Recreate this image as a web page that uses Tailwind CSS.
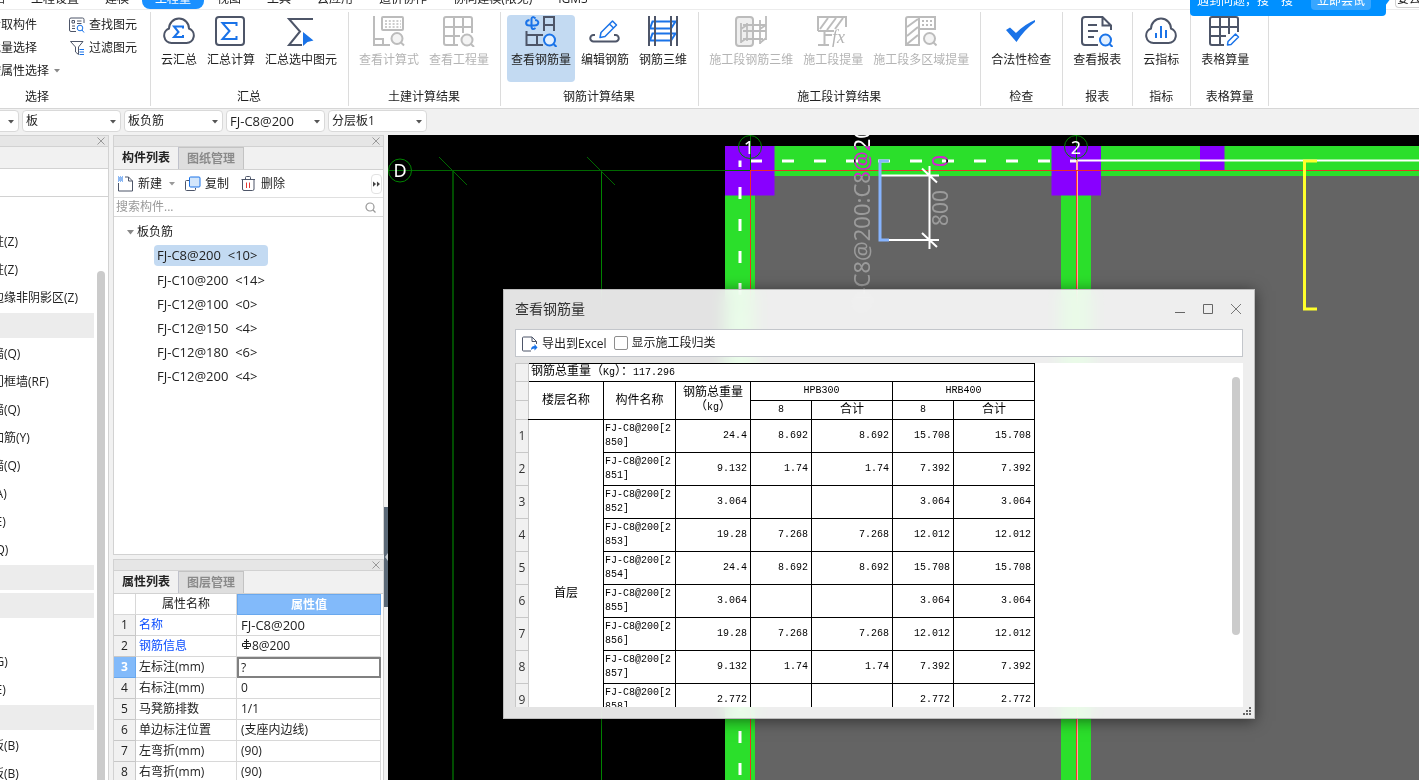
<!DOCTYPE html>
<html lang="zh-CN">

<head>
  <meta charset="UTF-8" />
  <meta name="viewport" content="width=device-width, initial-scale=1.0" />
  <title>查看钢筋量</title>
  <script src="https://cdn.jsdelivr.net/npm/@tailwindcss/browser@4"></script>
</head>

<body class="flex flex-col h-screen overflow-hidden bg-[#f1f1f1] text-[12px] leading-4 text-[#222] font-['Open_Sans','Noto_Sans_CJK_SC',sans-serif]">

  <!-- Pestañas superiores -->
  <header class="relative shrink-0 z-20">
    <nav class="flex items-end h-[10px] -ml-8 bg-white border-b border-[#ececec] whitespace-nowrap">
      <a href="#" class="px-[13px] leading-5">开始</a>
      <a href="#" class="px-[13px] leading-5">工程设置</a>
      <a href="#" class="px-[13px] leading-5">建模</a>
      <a href="#" class="px-[13px] leading-5 bg-[#1a90ff] text-white rounded-lg">工程量</a>
      <a href="#" class="px-[13px] leading-5">视图</a>
      <a href="#" class="px-[13px] leading-5">工具</a>
      <a href="#" class="px-[13px] leading-5">云应用</a>
      <a href="#" class="px-[13px] leading-5">造价协作</a>
      <a href="#" class="px-[13px] leading-5">协同建模(限免)</a>
      <a href="#" class="px-[13px] leading-5">IGMS</a>
    </nav>
    <!-- Aviso de búsqueda -->
    <div class="absolute right-[33px] -top-[15px] w-[196px] h-[31px] flex items-center justify-between pl-[7px] pr-[15px] rounded bg-[#0090ff] text-white">
      <span>遇到问题，搜一搜</span>
      <button class="px-[6px] h-[18px] leading-4 rounded-sm bg-[#38a6ff]">立即尝试</button>
      <svg class="absolute -right-[5px] top-[13px]" width="6" height="8" viewBox="0 0 6 8"><path d="M0 0h6L0 8z" fill="#0090ff" /></svg>
    </div>
    <div class="absolute right-0 -top-[12px] w-[24px] h-[20px] pl-px leading-5 overflow-hidden bg-white border border-r-0 border-[#d0d0d0] rounded-l-sm whitespace-nowrap">要去构件</div>
  </header>

  <!-- Cinta -->
  <div class="flex shrink-0 h-[99px] bg-white border-b border-[#d6d6d6] whitespace-nowrap">

    <section class="flex flex-col justify-between w-[227px] -ml-19 my-[2px] pt-px pb-px border-r border-[#dcdcdc] shrink-0">
      <div class="flex gap-[18px] pl-[65px]">
        <div class="flex flex-col items-start">
          <button class="h-[23px] leading-4">拾取构件</button>
          <button class="h-[23px] leading-4">批量选择</button>
          <button class="h-[23px] leading-4 flex items-center gap-[5px] w-[62px]">按属性选择
            <svg class="shrink-0" width="6" height="4" viewBox="0 0 6 4"><path d="M0 0h6L3 3.5z" fill="#888" /></svg>
          </button>
        </div>
        <div class="flex flex-col items-start">
          <button class="h-[23px] flex items-center gap-1">
            <svg width="16" height="16" viewBox="0 0 16 16" fill="none" stroke="#4d5568">
              <path d="M7 14.5H2A1.5 1.5 0 0 1 .5 13V2.5A1.5 1.5 0 0 1 2 1h11.500A1.5 1.5 0 0 1 15 2.500V6" />
              <path d="M3 3.500h2.500v2.500H3zM8 4h4.500M8 6.500h4.500M3 9h3M3 11.500h3" />
              <circle cx="11" cy="11" r="2.800" stroke="#1a73e8" /><path d="M13 13l2 2.500" stroke="#1a73e8" />
            </svg>查找图元
          </button>
          <button class="h-[23px] flex items-center gap-1">
            <svg width="16" height="16" viewBox="0 0 16 16" fill="none" stroke="#4d5568">
              <path d="M1.500 1.500h12.500L9.500 7v7.500L6.500 12V7z" />
              <path d="M10.500 9.500H15M10.500 12H15M10.500 14.500H15" stroke="#1a73e8" />
            </svg>过滤图元
          </button>
        </div>
      </div>
      <h2 class="text-center">选择</h2>
    </section>

    <section class="flex flex-col justify-between my-[2px] pt-[3px] pb-px pl-[6px] pr-[7px] border-r border-[#dcdcdc] shrink-0">
      <div class="flex gap-[2px]">
        <button class="flex flex-col items-center h-[67px] px-1 gap-[5px]">
          <svg width="32" height="32" viewBox="0 0 32 32" fill="none" stroke="#4d5568" stroke-width="2">
            <path d="M8.500 28a7.500 7.500 0 0 1-2.500-14.500a10 10 0 0 1 20 0a7.500 7.500 0 0 1-2.500 14.500z" />
            <path d="M20 13.500v-2h-9l4.500 5.500-4.500 5h9v-2" stroke="#1a73e8" />
          </svg>云汇总
        </button>
        <button class="flex flex-col items-center h-[67px] px-1 gap-[5px]">
          <svg width="32" height="32" viewBox="0 0 32 32" fill="none" stroke="#4d5568" stroke-width="2">
            <rect x="1" y="2" width="28" height="28" rx="3" />
            <path d="M21.500 11V8H7.500l7 8-7 8h14v-3" stroke="#1a73e8" />
          </svg>汇总计算
        </button>
        <button class="flex flex-col items-center h-[67px] px-1 gap-[5px]">
          <svg width="32" height="32" viewBox="0 0 32 32" fill="none" stroke="#4d5568" stroke-width="2">
            <path d="M28 4H4l11 12.500L4 30h13" />
            <path d="M18 17l10.500 8.500-6 1.500-4.500 4z" fill="#1a73e8" stroke="none" />
          </svg>汇总选中图元
        </button>
      </div>
      <h2 class="text-center">汇总</h2>
    </section>

    <section class="flex flex-col justify-between my-[2px] pt-[3px] pb-px pl-[6px] pr-[7px] border-r border-[#dcdcdc] shrink-0">
      <div class="flex gap-[2px] text-[#b4b4b4]">
        <button class="flex flex-col items-center h-[67px] px-1 gap-[5px]">
          <svg width="32" height="32" viewBox="0 0 32 32" fill="none" stroke="#bcbcbc" stroke-width="2">
            <path d="M1 1v29h16M1 24h9v6" />
            <rect x="9" y="2" width="21" height="13" rx="1" />
            <path d="M12 6h16M12 9h16M12 12h16" stroke-width="1.500" stroke-dasharray="2 1.800" />
            <circle cx="24" cy="23.500" r="5.500" fill="#f4f4f4" /><path d="M28 27.500l3 3" />
          </svg>查看计算式
        </button>
        <button class="flex flex-col items-center h-[67px] px-1 gap-[5px]">
          <svg width="32" height="32" viewBox="0 0 32 32" fill="none" stroke="#bcbcbc" stroke-width="2">
            <path d="M15 30H3a2 2 0 0 1-2-2V4a2 2 0 0 1 2-2h24a2 2 0 0 1 2 2v14M1 12h28M1 21h16M11 2v28M20 2v16" />
            <circle cx="24" cy="25" r="5.500" fill="#f4f4f4" /><path d="M28 29l3 3" />
          </svg>查看工程量
        </button>
      </div>
      <h2 class="text-center">土建计算结果</h2>
    </section>

    <section class="flex flex-col justify-between my-[2px] pt-[3px] pb-px pl-[6px] pr-[7px] border-r border-[#dcdcdc] shrink-0">
      <div class="flex gap-[2px]">
        <button class="flex flex-col items-center h-[67px] px-1 gap-[5px] rounded-sm bg-[#c3daf2]">
          <svg width="32" height="32" viewBox="0 0 32 32" fill="none" stroke="#4d5568" stroke-width="2">
            <path d="M19 16V2h10v14M19 10h10M1.500 16v14H18M1.500 20H18M12 20v10" />
            <path d="M10.500 3.500Q7 .5 6.500 4v8q.5 3.500 4 1M4.500 5C0 5.500 0 10.500 4.500 10.500h5c5 0 5-5.500.5-5.500" stroke="#1a73e8" />
            <circle cx="24.500" cy="25" r="5.500" fill="#e3f0ff" stroke="#1a73e8" /><path d="M28.500 29l3 3" stroke="#1a73e8" />
          </svg>查看钢筋量
        </button>
        <button class="flex flex-col items-center h-[67px] px-1 gap-[5px]">
          <svg width="32" height="32" viewBox="0 0 32 32" fill="none" stroke="#4d5568" stroke-width="2">
            <path d="M6 20H4.500a3.200 3.200 0 0 0 0 6.500h22a3.200 3.200 0 0 0 0-6.500H25" />
            <path d="M11 22.500l1-5L23.500 6l4 4L16 21.500zM20.500 9l4 4" stroke="#1a73e8" stroke-width="1.500" stroke-linejoin="round" />
          </svg>编辑钢筋
        </button>
        <button class="flex flex-col items-center h-[67px] px-1 gap-[5px]">
          <svg width="32" height="32" viewBox="0 0 32 32" fill="none" stroke="#4d5568" stroke-width="2">
            <path d="M5.500 6.500h23l-4.500 7H3zM5.500 18.500h23l-4.500 7H3z" stroke="#1a73e8" />
            <path d="M2 1v30M8 1v30M24 1v30M30 1v30" />
          </svg>钢筋三维
        </button>
      </div>
      <h2 class="text-center">钢筋计算结果</h2>
    </section>

    <section class="flex flex-col justify-between my-[2px] pt-[3px] pb-px pl-[6px] pr-[7px] border-r border-[#dcdcdc] shrink-0">
      <div class="flex gap-[2px] text-[#b4b4b4]">
        <button class="flex flex-col items-center h-[67px] px-1 gap-[5px]">
          <svg width="32" height="32" viewBox="0 0 32 32" fill="none" stroke="#bcbcbc" stroke-width="2">
            <rect x="1" y="2" width="17" height="29" rx="3" fill="#efefef" />
            <path d="M6 8v20M12 8v18M25 5v24M31 1v24M8 10h23M8 16h23M8 24h20M6 14l6-4M6 27l6-4M25 14l6-4M25 28l6-5" stroke-width="1.800" />
          </svg>施工段钢筋三维
        </button>
        <button class="flex flex-col items-center h-[67px] px-1 gap-[5px]">
          <svg width="32" height="32" viewBox="0 0 32 32" fill="none" stroke="#bcbcbc" stroke-width="2">
            <path d="M1 16V2h28v10M1 16h16M3 14L11 3M10 15l9-12M18 14l8-11M7.500 16v14M1 30h11M7.500 20H15" />
            <text x="15" y="28" font-family="Liberation Serif" font-style="italic" font-size="18" fill="#b4b4b4" stroke="none">fx</text>
          </svg>施工段提量
        </button>
        <button class="flex flex-col items-center h-[67px] px-1 gap-[5px]">
          <svg width="32" height="32" viewBox="0 0 32 32" fill="none" stroke="#bcbcbc" stroke-width="2">
            <path d="M14 2H3a2 2 0 0 0-2 2v26h13zh16v12H14M2 12l11-8M2 21l11-9M2 29l11-9" />
            <path d="M17 6h10M17 10h10" stroke-dasharray="2 2" />
            <circle cx="24.500" cy="23.500" r="5.500" fill="#f4f4f4" /><path d="M28.500 27.500l3 3" />
          </svg>施工段多区域提量
        </button>
      </div>
      <h2 class="text-center">施工段计算结果</h2>
    </section>

    <section class="flex flex-col justify-between my-[2px] pt-[3px] pb-px pl-[6px] pr-[7px] border-r border-[#dcdcdc] shrink-0">
      <button class="flex flex-col items-center h-[67px] px-1 gap-[5px]">
        <svg width="32" height="32" viewBox="0 0 32 32"><path d="M1 15l4-2.500 6 5.500Q20 9 30 5v2Q19 15 11.500 27z" fill="#1a73e8" /></svg>合法性检查
      </button>
      <h2 class="text-center">检查</h2>
    </section>

    <section class="flex flex-col justify-between my-[2px] pt-[3px] pb-px pl-[6px] pr-[7px] border-r border-[#dcdcdc] shrink-0">
      <button class="flex flex-col items-center h-[67px] px-1 gap-[5px]">
        <svg width="32" height="32" viewBox="0 0 32 32" fill="none" stroke="#4d5568" stroke-width="2">
          <path d="M17 30H4a3 3 0 0 1-3-3V5a3 3 0 0 1 3-3h17.500L30 10.500V15M21.500 2v8.500H30M7 10h9M7 16h10M7 22h6" />
          <circle cx="24.500" cy="25" r="5.500" fill="#e3f0ff" stroke="#1a73e8" /><path d="M28.500 29l3 3" stroke="#1a73e8" />
        </svg>查看报表
      </button>
      <h2 class="text-center">报表</h2>
    </section>

    <section class="flex flex-col justify-between my-[2px] pt-[3px] pb-px pl-[6px] pr-[7px] border-r border-[#dcdcdc] shrink-0">
      <button class="flex flex-col items-center h-[67px] px-1 gap-[5px]">
        <svg width="32" height="32" viewBox="0 0 32 32" fill="none" stroke="#4d5568" stroke-width="2">
          <path d="M8.500 28a7.500 7.500 0 0 1-2.500-14.500a10 10 0 0 1 20 0a7.500 7.500 0 0 1-2.500 14.500z" />
          <path d="M11 18v5M16 11v12M21 15v8" stroke="#1a73e8" />
        </svg>云指标
      </button>
      <h2 class="text-center">指标</h2>
    </section>

    <section class="flex flex-col justify-between items-start my-[2px] pt-[3px] pb-px px-[6px] w-[78px] border-r border-[#dcdcdc] shrink-0">
      <button class="flex flex-col items-center h-[67px] px-1 gap-[5px]">
        <svg width="32" height="32" viewBox="0 0 32 32" fill="none" stroke="#4d5568" stroke-width="2">
          <path d="M15 30H3a2 2 0 0 1-2-2V4a2 2 0 0 1 2-2h24a2 2 0 0 1 2 2v13M1 12h28M1 21h16M11 2v28M20 2v17" />
          <path d="M17 31h14V18h-6l-8 8z" fill="#fff" stroke="none" />
          <path d="M18.500 30l.500-3.500 7.500-7.500 3 3-7.500 7.500z" stroke="#1a73e8" stroke-width="1.500" stroke-linejoin="round" />
        </svg>表格算量
      </button>
      <h2 class="w-full text-center">表格算量</h2>
    </section>
  </div>

  <!-- Filtros -->
  <div class="flex shrink-0 gap-[3px] h-[26px] pt-px -ml-20">
    <div class="relative">
      <select aria-label="楼层" class="appearance-none w-[99px] h-[22px] pl-[3px] bg-white border border-[#d9d9d9] rounded-sm"><option>首层</option></select>
      <svg class="absolute right-[5px] top-[10px]" width="6" height="4" viewBox="0 0 6 4"><path d="M0 0h6L3 3.500z" fill="#555" /></svg>
    </div>
    <div class="relative">
      <select aria-label="构件类别" class="appearance-none w-[99px] h-[22px] pl-[3px] bg-white border border-[#d9d9d9] rounded-sm"><option>板</option></select>
      <svg class="absolute right-[5px] top-[10px]" width="6" height="4" viewBox="0 0 6 4"><path d="M0 0h6L3 3.500z" fill="#555" /></svg>
    </div>
    <div class="relative">
      <select aria-label="构件类型" class="appearance-none w-[99px] h-[22px] pl-[3px] bg-white border border-[#d9d9d9] rounded-sm"><option>板负筋</option></select>
      <svg class="absolute right-[5px] top-[10px]" width="6" height="4" viewBox="0 0 6 4"><path d="M0 0h6L3 3.500z" fill="#555" /></svg>
    </div>
    <div class="relative">
      <select aria-label="构件" class="appearance-none w-[99px] h-[22px] pl-[3px] text-[13px] bg-white border border-[#d9d9d9] rounded-sm"><option>FJ-C8@200</option></select>
      <svg class="absolute right-[5px] top-[10px]" width="6" height="4" viewBox="0 0 6 4"><path d="M0 0h6L3 3.500z" fill="#555" /></svg>
    </div>
    <div class="relative">
      <select aria-label="分层" class="appearance-none w-[99px] h-[22px] pl-[3px] bg-white border border-[#d9d9d9] rounded-sm"><option>分层板1</option></select>
      <svg class="absolute right-[5px] top-[10px]" width="6" height="4" viewBox="0 0 6 4"><path d="M0 0h6L3 3.500z" fill="#555" /></svg>
    </div>
  </div>

  <div class="flex flex-1 min-h-0">

    <!-- Navegación -->
    <aside class="flex flex-col shrink-0 w-[109px] overflow-hidden bg-white border-r border-t border-[#d2d2d2]">
      <div class="flex shrink-0 items-center justify-end h-[11px] pr-[3px] bg-[#e6e6e6] border-b border-[#d2d2d2]">
        <button aria-label="关闭导航栏"><svg width="8" height="8" viewBox="0 0 8 8" stroke="#999"><path d="M.5.5l7 7M7.500.5l-7 7" /></svg></button>
      </div>
      <div class="shrink-0 h-[22px] bg-[#f1f1f1] border-b border-[#d2d2d2]"></div>
      <div class="shrink-0 h-[28px] border-b border-[#d2d2d2]"></div>
      <div class="flex flex-1 min-h-0 justify-between">
        <ul id="navList" class="w-[94px] pt-[3px]"></ul>
        <div class="w-2 mr-[3px] mt-[74px] rounded-t bg-[#cbcbcb]"></div>
      </div>
    </aside>

    <!-- Paneles centrales -->
    <div class="flex flex-col shrink-0 w-[271px] ml-1 gap-[4px]">
      <section class="flex flex-col shrink-0 h-[420px] bg-white border border-[#d2d2d2]">
        <div class="flex shrink-0 items-center justify-end h-[11px] pr-[3px] bg-[#e6e6e6] border-b border-[#d2d2d2]">
          <button aria-label="关闭构件列表"><svg width="8" height="8" viewBox="0 0 8 8" stroke="#999"><path d="M.5.5l7 7M7.500.5l-7 7" /></svg></button>
        </div>
        <div class="flex shrink-0 h-[23px] bg-[#f1f1f1] border-b border-[#d2d2d2] font-bold">
          <button class="w-[65px] border-r border-[#bfc1cb]">构件列表</button>
          <button class="w-[65px] border-r border-t border-[#c3c3c3] bg-[#dedede] text-[#8a8a8a]">图纸管理</button>
        </div>
        <div class="flex shrink-0 items-center h-[28px] pl-1 pr-px border-b border-[#e0e0e0]">
          <button class="flex items-center gap-[4px]">
            <svg width="16" height="16" viewBox="0 0 16 16" fill="none" stroke="#4d5568">
              <path d="M.5 7v8h14V5l-4-4H7M10.500 1v4h4" />
              <path d="M0 1h5M0 3h5M0 5h5" stroke="#1a73e8" stroke-dasharray="1 1" /><path d="M1 2h4M1 4h4" stroke="#1a73e8" stroke-dasharray="1 1" />
            </svg>新建
          </button>
          <svg class="ml-[7px]" width="6" height="4" viewBox="0 0 6 4"><path d="M0 0h6L3 3.500z" fill="#999" /></svg>
          <button class="flex items-center gap-[4px] ml-[10px]">
            <svg width="16" height="16" viewBox="0 0 16 16" fill="none" stroke="#4d5568">
              <path d="M4 4.500H1.500a1 1 0 0 0-1 1v8a1 1 0 0 0 1 1h8a1 1 0 0 0 1-1V12" />
              <rect x="4.500" y="1" width="10.500" height="10" rx="1" fill="#d3e6fb" stroke="#1a73e8" />
            </svg>复制
          </button>
          <button class="flex items-center gap-[4px] ml-[12px]">
            <svg width="16" height="16" viewBox="0 0 16 16" fill="none" stroke="#4d5568">
              <path d="M.5 3.500H14M4.500 3.500V1.500A1 1 0 0 1 5.500.5h3a1 1 0 0 1 1 1v2M1.500 3.500V13a1.500 1.500 0 0 0 1.500 1.500h8.500A1.500 1.500 0 0 0 13 13V3.500" /><path d="M5.500 6.500v5.500M8.500 6.500v5.500" stroke="#e53935" />
            </svg>删除
          </button>
          <button aria-label="更多" class="flex items-center justify-center ml-auto w-[11px] h-5 border border-[#e2e2e2] rounded-sm">
            <svg class="shrink-0" width="7" height="6" viewBox="0 0 8 6" fill="#444"><path d="M0 0l3.500 3L0 6zM4.500 0L8 3 4.500 6z" /></svg>
          </button>
        </div>
        <div class="flex shrink-0 items-center h-[19px] pl-[2px] pr-[7px] border-b border-[#d8d8d8]">
          <input type="text" aria-label="搜索构件" placeholder="搜索构件..." class="flex-1 min-w-0 outline-none placeholder:text-[#999]" />
          <svg width="11" height="11" viewBox="0 0 11 11" fill="none" stroke="#999" stroke-width="1.200"><circle cx="5" cy="5" r="4" /><path d="M8 8l2.500 2.500" /></svg>
        </div>
        <div class="pt-[3px]">
          <div class="flex items-center h-[24px] pl-[13px] gap-[3px]">
            <svg width="7" height="5" viewBox="0 0 7 5"><path d="M0 0h7L3.500 4.500z" fill="#888" /></svg>板负筋
          </div>
          <ul class="pl-10 text-[13px]">
            <li class="h-[24px] py-px"><span class="block w-[114px] h-[21px] pl-[3px] leading-5 rounded-sm bg-[#c3daf2]">FJ-C8@200&nbsp; &lt;10&gt;</span></li>
            <li class="h-[24px] pl-[3px] leading-6">FJ-C10@200&nbsp; &lt;14&gt;</li>
            <li class="h-[24px] pl-[3px] leading-6">FJ-C12@100&nbsp; &lt;0&gt;</li>
            <li class="h-[24px] pl-[3px] leading-6">FJ-C12@150&nbsp; &lt;4&gt;</li>
            <li class="h-[24px] pl-[3px] leading-6">FJ-C12@180&nbsp; &lt;6&gt;</li>
            <li class="h-[24px] pl-[3px] leading-6">FJ-C12@200&nbsp; &lt;4&gt;</li>
          </ul>
        </div>
      </section>

      <section class="flex flex-col flex-1 min-h-0 overflow-hidden bg-white border border-b-0 border-[#d2d2d2]">
        <div class="flex shrink-0 items-center justify-end h-[11px] pr-[3px] bg-[#e6e6e6] border-b border-[#d2d2d2]">
          <button aria-label="关闭属性列表"><svg width="8" height="8" viewBox="0 0 8 8" stroke="#999"><path d="M.5.5l7 7M7.500.5l-7 7" /></svg></button>
        </div>
        <div class="flex shrink-0 h-[23px] bg-[#f1f1f1] border-b border-[#d2d2d2] font-bold">
          <button class="w-[65px] border-r border-[#bfc1cb]">属性列表</button>
          <button class="w-[65px] border-r border-t border-[#c3c3c3] bg-[#dedede] text-[#8a8a8a]">图层管理</button>
        </div>
        <table class="table-fixed w-[267px] border-separate border-spacing-0">
          <colgroup><col class="w-[22px]" /><col class="w-[101px]" /><col /></colgroup>
          <thead>
            <tr>
              <th class="h-[21px] p-0 border-r border-b border-[#d8d8d8]"></th>
              <th class="h-[21px] p-0 font-normal border-r border-b border-[#d8d8d8]">属性名称</th>
              <th class="h-[21px] p-0 bg-[#82bafa] border border-[#69a8ee] text-white">属性值</th>
            </tr>
          </thead>
          <tbody id="propRows"></tbody>
        </table>
      </section>
    </div>

    <!-- Divisor -->
    <div class="shrink-0 w-1 pt-[372px]">
      <button aria-label="收起面板" class="flex items-center w-1 h-[100px] bg-[#5b6977]">
        <svg width="4" height="8" viewBox="0 0 4 8"><path d="M4 0v8L1 4z" fill="#c8ced4" /></svg>
      </button>
    </div>

    <!-- Área de dibujo -->
    <main class="relative flex-1 min-w-0 overflow-hidden bg-black">
      <svg class="absolute inset-0 w-full h-full" font-family="Noto Sans" fill="none">
        <g transform="translate(-388 -135)">
          <path d="M755 175h2000v1000H755z" fill="#646464" />
          <path d="M725 146h2000v30H725zM725 146h30v1000h-30zM1061 146h30v1000h-30z" fill="#2bdf2b" />
          <path d="M725 146h49.500v49.500H725zM1051.500 146h49.500v49.500h-49.500zM1200 146h24.500v24.500H1200z" fill="#8800ff" />
          <path d="M750 161H1076" stroke="#fff" stroke-width="3" stroke-dasharray="12 20" />
          <path d="M740 160.500V1000" stroke="#fff" stroke-width="3" stroke-dasharray="12 20" stroke-dashoffset="5.500" />
          <path d="M1076 160.500H2400" stroke="#fff" stroke-width="2" />
          <path d="M1077 160V1000" stroke="#ffb0a0" stroke-width="2" />
          <path d="M1076.500 170V1000" stroke="#ff3030" />
          <path d="M750 170.500H2400" stroke="#e8302a" /><path d="M750.500 170V1000" stroke="#e8302a" />
          <path d="M388 170.500H750M750.500 135v35M1076.500 135v25" stroke="#006800" />
          <path d="M453 171V1000" stroke="#004c00" stroke-width="2" />
          <path d="M601.500 171V1000" stroke="#008400" />
          <path d="M439 157l28 28M587 157l28 28" stroke="#006800" />
          <g stroke="#008400"><circle cx="400" cy="170.500" r="11.500" /><circle cx="750" cy="147" r="11.500" /><circle cx="1076" cy="147" r="11.500" /></g>
          <g fill="#fff" font-size="18" text-anchor="middle">
            <text x="400" y="177">D</text><text x="749" y="154">1</text><text x="1076" y="154">2</text>
          </g>
          <!-- Cota del refuerzo seleccionado -->
          <path d="M881 175.500h58M889 240h50M929.500 166v83M922 168.500l15 14M922 233l15 14" stroke="#fff" stroke-width="2" />
          <path d="M889 161h-9v79h9" stroke="#86b4ff" stroke-width="3" />
          <path d="M1317 161h-12.500v148h12.500" stroke="#ffff2b" stroke-width="3" />
          <g fill="#fff" font-size="21">
            <text class="mix-blend-difference" font-size="22" transform="translate(870 312) rotate(-90)">FJ-C8@200:C8@200</text>
            <text class="mix-blend-difference" transform="translate(948 226) rotate(-90)">800</text>
            <text class="mix-blend-difference" transform="translate(948 167) rotate(-90)">0</text>
          </g>
        </g>
      </svg>

      <!-- Ventana 查看钢筋量 -->
      <div role="dialog" aria-labelledby="dlgTitle"
        class="absolute left-[115px] top-[154px] w-[752px] h-[430px] flex flex-col px-[11px] pb-[11px] bg-white/89 backdrop-blur-sm border border-[#bdbdbd] shadow-[0_2px_14px_rgba(0,0,0,0.5)]">
        <div class="flex shrink-0 items-center justify-between h-[39px] pr-px pb-[2px]">
          <h1 id="dlgTitle" class="text-[14px] text-[#333]">查看钢筋量</h1>
          <div class="flex gap-[16px]">
            <button aria-label="最小化"><svg width="12" height="12" viewBox="0 0 12 12" fill="none" stroke="#666"><path d="M1 9.500h10" /></svg></button>
            <button aria-label="最大化"><svg width="12" height="12" viewBox="0 0 12 12" fill="none" stroke="#666"><path d="M1.500 1.500h9v9h-9z" /></svg></button>
            <button aria-label="关闭"><svg width="12" height="12" viewBox="0 0 12 12" fill="none" stroke="#777"><path d="M1 1l10 10M11 1L1 11" /></svg></button>
          </div>
        </div>
        <div class="flex shrink-0 items-center h-[28px] pl-[6px] bg-white border border-[#c3c6cb]">
          <button class="flex items-center gap-[4px] pt-[2px]">
            <svg width="16" height="16" viewBox="0 0 16 16" fill="none" stroke="#4d5568">
              <path d="M9 15H1.500a1 1 0 0 1-1-1V2a1 1 0 0 1 1-1H10l4.500 4.500V8M10 1v4.500h4.500" /><path d="M9 14q0-4 3.500-4V8l3 3.500-3 3v-2Q10 12.500 9 14z" fill="#1a73e8" stroke="none" />
            </svg>导出到Excel
          </button>
          <input id="chkSegment" type="checkbox" class="appearance-none w-[14px] h-[14px] ml-[8px] bg-white border border-[#8d8d8d] rounded-[2px]" />
          <label for="chkSegment" class="ml-[3px]">显示施工段归类</label>
        </div>
        <div class="flex flex-1 min-h-0 justify-between mt-[6px] overflow-hidden bg-white">
          <table class="table-fixed w-[520px] shrink-0 self-start border-collapse text-black leading-[14px] font-['Liberation_Mono','Noto_Sans_CJK_SC',monospace]">
            <colgroup>
              <col class="w-[13px]" /><col class="w-[75px]" /><col class="w-[72px]" /><col class="w-[75px]" />
              <col class="w-[61px]" /><col class="w-[81px]" /><col class="w-[61px]" /><col class="w-[81px]" />
            </colgroup>
            <thead>
              <tr>
                <th class="h-[18px] p-0 bg-[#f1f1f1] border border-[#c8c8c8]"></th>
                <th colspan="7" class="h-[18px] py-0 px-[2px] text-left font-normal border border-black border-l-[#c8c8c8]">钢筋总重量（<span class="text-[10px]">Kg</span>）：<span class="text-[10px]">117.296</span></th>
              </tr>
              <tr>
                <th class="h-[19px] p-0 bg-[#f1f1f1] border border-[#c8c8c8]"></th>
                <th rowspan="2" class="p-0 font-normal border border-black border-l-[#c8c8c8]">楼层名称</th>
                <th rowspan="2" class="p-0 font-normal border border-black">构件名称</th>
                <th rowspan="2" class="p-0 font-normal border border-black">钢筋总重量<br />（<span class="text-[10px]">kg</span>）</th>
                <th colspan="2" class="h-[19px] p-0 text-[10px] font-normal border border-black">HPB300</th>
                <th colspan="2" class="h-[19px] p-0 text-[10px] font-normal border border-black">HRB400</th>
              </tr>
              <tr>
                <th class="h-[19px] p-0 bg-[#f1f1f1] border border-[#c8c8c8]"></th>
                <th class="h-[19px] p-0 text-[10px] font-normal border border-black">8</th>
                <th class="h-[19px] p-0 font-normal border border-black">合计</th>
                <th class="h-[19px] p-0 text-[10px] font-normal border border-black">8</th>
                <th class="h-[19px] p-0 font-normal border border-black">合计</th>
              </tr>
            </thead>
            <tbody id="rebarRows"></tbody>
          </table>
          <div class="shrink-0 w-2 h-[258px] mt-[14px] mr-[3px] rounded bg-[#cbcbcb]"></div>
        </div>
        <svg class="absolute right-[2px] bottom-[2px]" width="9" height="9" viewBox="0 0 9 9" fill="#666"><path d="M6 0h2v2H6zM3 3h2v2H3zM6 3h2v2H6zM0 6h2v2H0zM3 6h2v2H3zM6 6h2v2H6z" /></svg>
      </div>
    </main>
  </div>

  <script>
    // null = encabezado de grupo
    const navItems = ['柱(Z)', '构造柱(Z)', '砌体柱(Z)', '约束边缘非阴影区(Z)', null, '剪力墙(Q)', '人防门框墙(RF)', '砌体墙(Q)',
      '砌体加筋(Y)', '保温墙(Q)', '暗梁(A)', '墙垛(E)', '幕墙(Q)', null, null, '梁(L)', '连梁(G)', '圈梁(E)', null, '现浇板(B)', '螺旋板(B)'];

    document.getElementById('navList').innerHTML = navItems.map(t => t
      ? `<li class="h-[28px] -ml-8 leading-7 whitespace-nowrap"><a href="#">${t}</a></li>`
      : `<li class="h-[28px] py-px"><div class="h-[25px] bg-[#ececec]"></div></li>`).join('');

    const rebarMark = `<svg class="inline align-baseline" width="11" height="11" viewBox="0 0 11 11" fill="none" stroke="#222"><path d="M5.500 0v10M3 2.500h5M1.500 4.500h8v3h-8zM3 9.500h5" /></svg>`;
    const props = [
      ['名称', '<span class="text-[13px]">FJ-C8@200</span>', true],
      ['钢筋信息', rebarMark + '8@200', true],
      ['左标注(mm)', '?'],
      ['右标注(mm)', '0'],
      ['马凳筋排数', '1/1'],
      ['单边标注位置', '(支座内边线)'],
      ['左弯折(mm)', '(90)'],
      ['右弯折(mm)', '(90)']
    ];

    document.getElementById('propRows').innerHTML = props.map(([name, value, key], i) => {
      const active = i === 2;
      const head = active
        ? 'h-[21px] p-0 bg-[#82bafa] text-white font-bold border-r border-b border-[#69a8ee]'
        : 'h-[21px] p-0 bg-[#f1f1f1] font-normal border-r border-b border-[#c8c8c8]';
      const cell = active
        ? `<td class="h-[21px] p-0"><input aria-label="${name}" value="${value}" class="block w-full h-[21px] pl-[2px] border-2 border-[#808080] outline-none" /></td>`
        : `<td class="h-[21px] py-0 px-1 border-r border-b border-[#d8d8d8]">${value}</td>`;
      return `<tr><th class="${head}">${i + 1}</th>
        <td class="${key ? 'h-[21px] py-0 px-[3px] text-[#0a4dff] border-r border-b border-[#d8d8d8]' : 'h-[21px] py-0 px-[3px] border-r border-b border-[#d8d8d8]'}">${name}</td>${cell}</tr>`;
    }).join('');

    // total, HPB300, HRB400
    const rebar = [
      ['24.4', '8.692', '15.708'],
      ['9.132', '1.74', '7.392'],
      ['3.064', '', '3.064'],
      ['19.28', '7.268', '12.012'],
      ['24.4', '8.692', '15.708'],
      ['3.064', '', '3.064'],
      ['19.28', '7.268', '12.012'],
      ['9.132', '1.74', '7.392'],
      ['2.772', '', '2.772']
    ];
    const num = v => `<td class="h-[33px] py-0 px-[3px] text-right text-[10px] border border-black">${v}</td>`;

    document.getElementById('rebarRows').innerHTML = rebar.map(([total, hpb, hrb], i) => `<tr>
      <th class="h-[33px] p-0 bg-[#f1f1f1] text-[#333] font-normal border border-[#c8c8c8] font-['Open_Sans',sans-serif]">${i + 1}</th>
      ${i === 0 ? '<td rowspan="10" class="p-0 text-center border border-black border-l-[#c8c8c8]">首层</td>' : ''}
      <td class="h-[33px] pt-0 pb-px px-px text-[10px] break-all border border-black">FJ-C8@200[2${850 + i}]</td>
      ${num(total)}${num(hpb)}${num(hpb)}${num(hrb)}${num(hrb)}</tr>`).join('')
      + `<tr><th class="h-[51px] bg-[#f1f1f1] border border-[#c8c8c8]"></th><td colspan="6" class="border border-black"></td></tr>`;
  </script>
</body>

</html>
